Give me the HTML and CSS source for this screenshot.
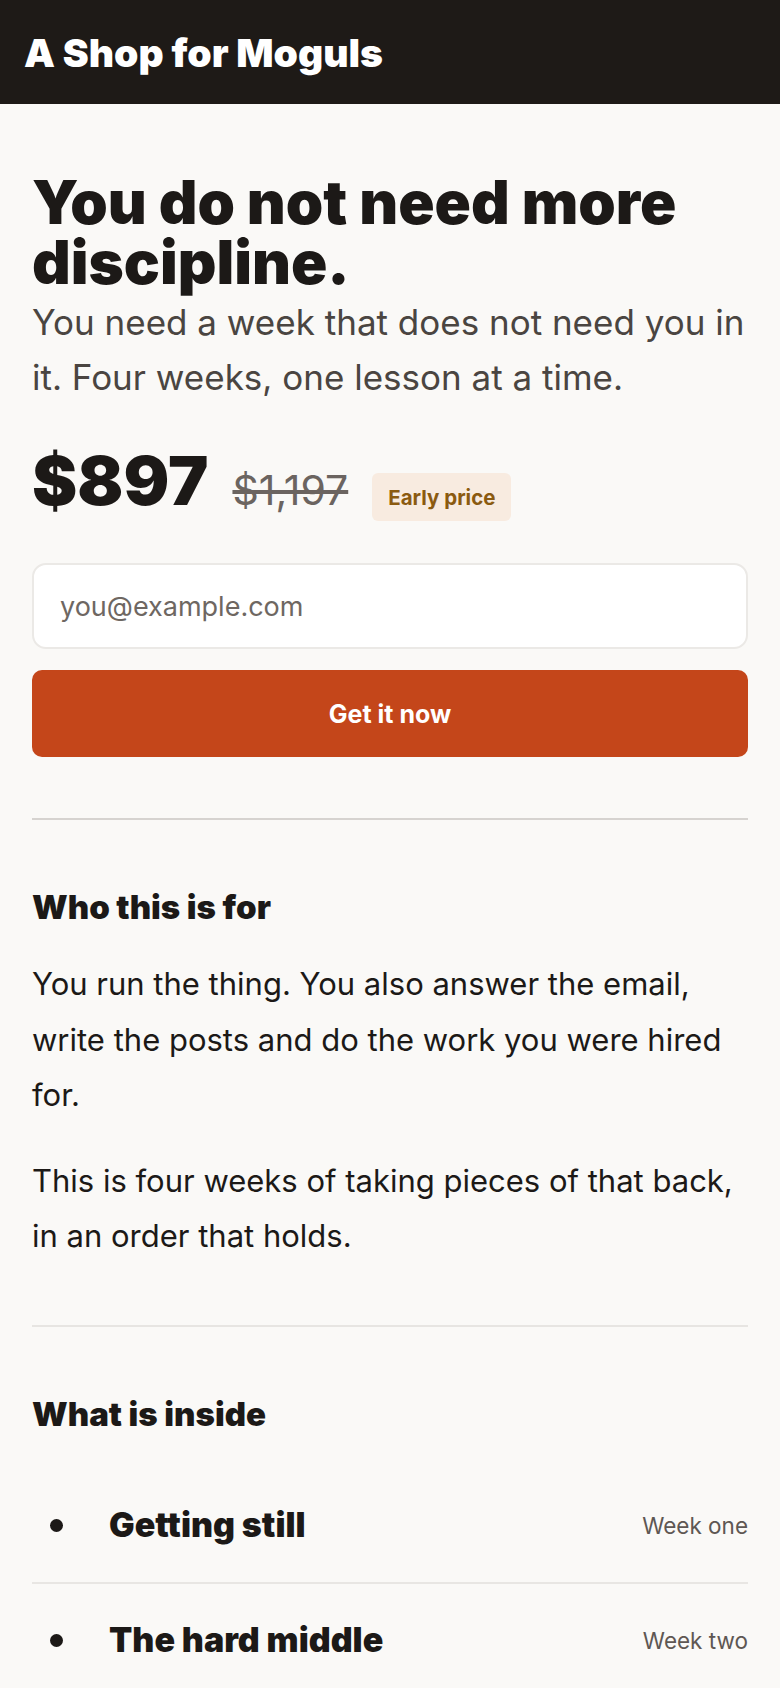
FILE: index.html
```html
<!DOCTYPE html>
<html lang="en">
<head>
    <meta charset="UTF-8">
    <meta name="viewport" content="width=device-width, initial-scale=1.0">
    <title>A Shop for Moguls</title>
    <link rel="stylesheet" href="styles.css">
</head>
<body>
    <header class="topbar">
        <div class="brand">A Shop for Moguls</div>
    </header>

    <main class="page">
        <section class="hero">
            <h1>You do not need more discipline.</h1>
            <p class="lede">You need a week that does not need you in it. Four weeks, one lesson at a time.</p>

            <div class="price-row">
                <span class="price">$897</span>
                <s class="was">$1,197</s>
                <span class="tag">Early price</span>
            </div>

            <form class="buy" onsubmit="return false;">
                <input type="email" class="email" placeholder="you@example.com">
                <button type="submit" class="cta">Get it now</button>
            </form>
        </section>

        <hr class="rule">

        <section class="block">
            <h2>Who this is for</h2>
            <p>You run the thing. You also answer the email, write the posts and do the work you were hired for.</p>
            <p>This is four weeks of taking pieces of that back, in an order that holds.</p>
        </section>

        <hr class="rule light">

        <section class="block">
            <h2>What is inside</h2>
            <ul class="lessons">
                <li><span class="dot"></span><span class="name">Getting still</span><span class="week">Week one</span></li>
                <li><span class="dot"></span><span class="name">The hard middle</span><span class="week">Week two</span></li>
            </ul>
        </section>
    </main>
</body>
</html>
```

FILE: styles.css
```css
body {
    margin: 0;
    background: #faf9f7;
    color: #1c1917;
    font-family: Inter, "Liberation Sans", Arial, sans-serif;
}
.topbar {
    background: #1e1a17;
    height: 104px;
    padding: 0 24px;
    display: flex;
    align-items: center;
}
.brand {
    color: #fff;
    font-size: 39px;
    font-weight: 900;
}
.page {
    padding: 68px 32px 40px;
}
h1 {
    margin: 0;
    font-size: 60px;
    line-height: 60px;
    font-weight: 900;
}
.lede {
    margin: 3px 0 0;
    font-size: 35px;
    line-height: 55px;
    color: #4a4541;
}
.price-row {
    display: flex;
    align-items: baseline;
    gap: 24px;
    margin-top: 41px;
}
.price {
    font-size: 68px;
    line-height: 1;
    font-weight: 900;
}
.was {
    font-size: 41px;
    color: #6b6460;
}
.tag {
    background: #f8ebe0;
    color: #8b5a10;
    font-size: 20.5px;
    font-weight: 700;
    line-height: 29px;
    padding: 10px 16px 9px;
    border-radius: 6px;
}
.buy {
    margin-top: 42px;
    display: flex;
    flex-direction: column;
    gap: 21px;
}
.email {
    height: 86px;
    box-sizing: border-box;
    border: 2px solid #ebe9e6;
    border-radius: 14px;
    background: #fff;
    padding: 0 26px;
    font-family: inherit;
    font-size: 27px;
    color: #1c1917;
}
.email::placeholder {
    color: #6e6762;
}
.cta {
    height: 87px;
    border: 0;
    border-radius: 10px;
    background: #c4461a;
    color: #fff;
    font-family: inherit;
    font-size: 25px;
    font-weight: 700;
}
.rule {
    border: 0;
    border-top: 2px solid #d6d3d0;
    margin: 61px 0 0;
}
.rule.light {
    border-top-color: #e7e5e2;
}
.block {
    padding-top: 68px;
}
h2 {
    margin: 0;
    font-size: 33px;
    line-height: 38px;
    font-weight: 900;
}
.block p {
    margin: 30px 0 0;
    font-size: 31px;
    line-height: 55.5px;
}
.lessons {
    list-style: none;
    margin: 36px 0 0;
    padding: 0;
}
.lessons li {
    display: flex;
    align-items: center;
    padding: 36.5px 0;
    border-bottom: 2px solid #e8e6e3;
}
.lessons li:last-child {
    border-bottom: 0;
}
.dot {
    width: 13px;
    height: 13px;
    border-radius: 50%;
    background: #1c1917;
    margin: 0 46px 0 18px;
}
.name {
    font-size: 34px;
    line-height: 40px;
    font-weight: 900;
}
.week {
    margin-left: auto;
    font-size: 22.5px;
    color: #5e5753;
}
```
